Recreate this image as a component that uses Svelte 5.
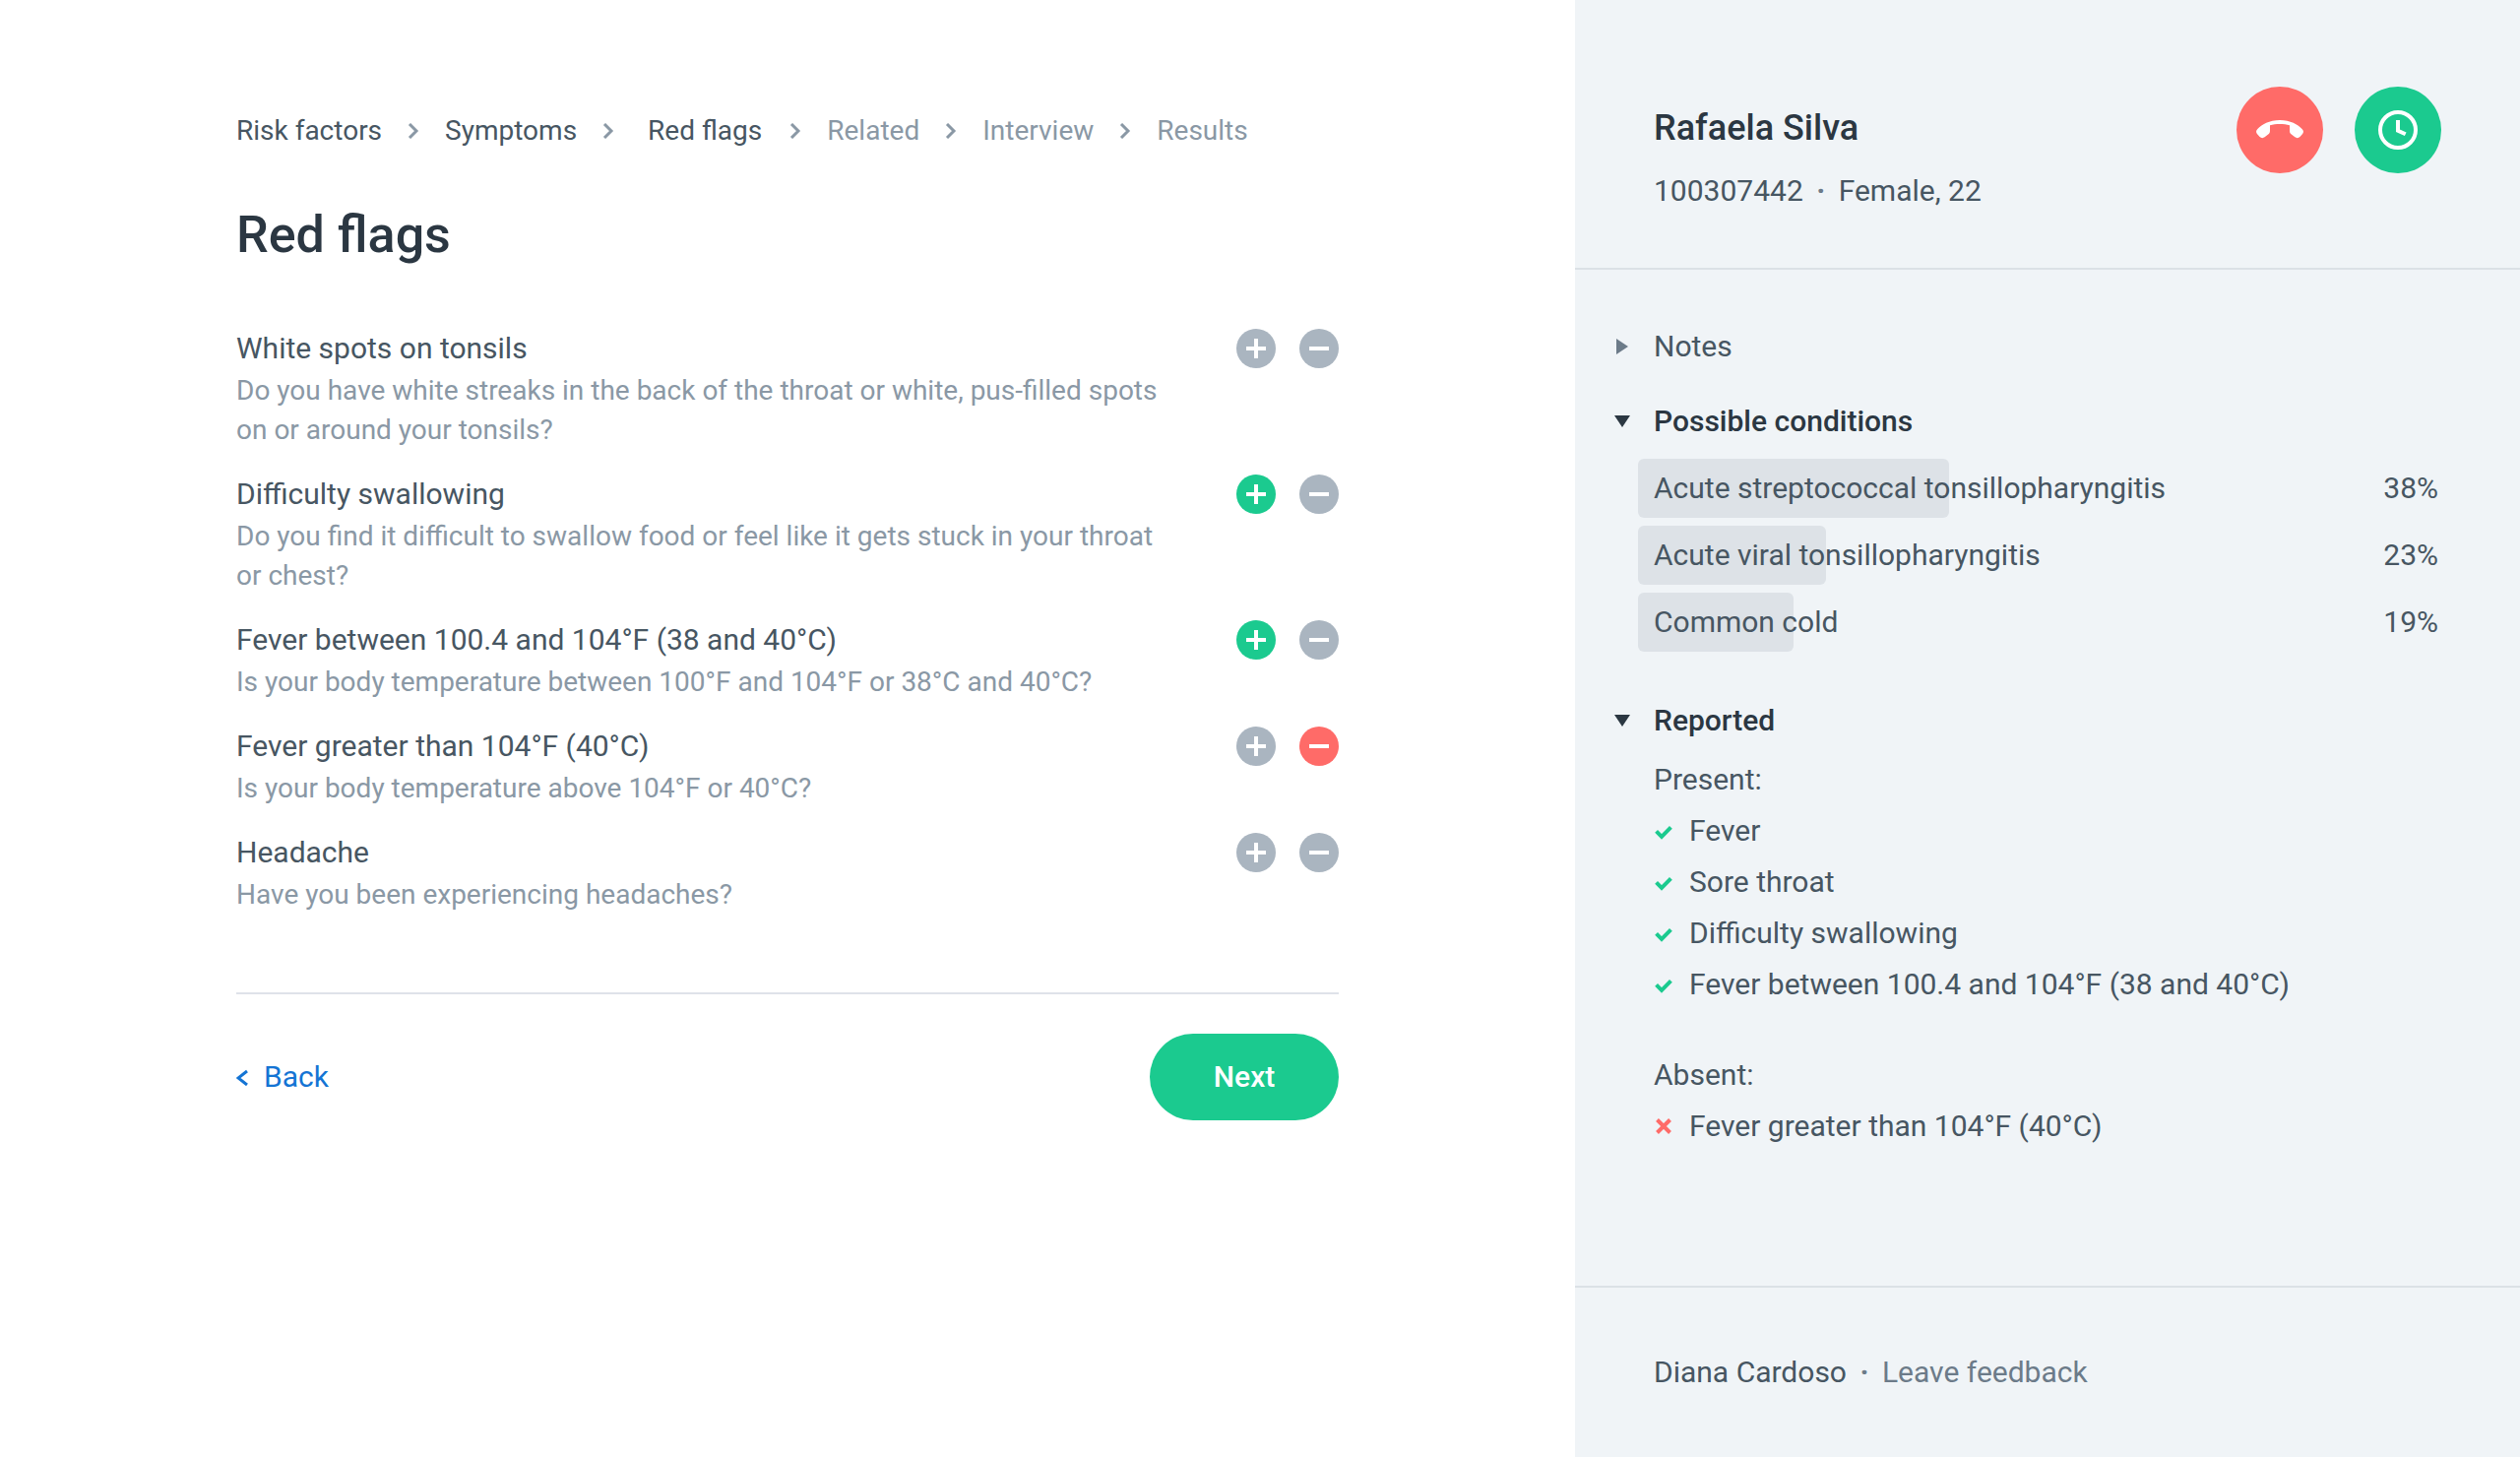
<script>
  const steps = ['Risk factors', 'Symptoms', 'Red flags', 'Related', 'Interview', 'Results']
  const current = 2

  let questions = $state([
    {
      name: 'White spots on tonsils',
      text: 'Do you have white streaks in the back of the throat or white, pus-filled spots on or around your tonsils?',
      answer: ''
    },
    {
      name: 'Difficulty swallowing',
      text: 'Do you find it difficult to swallow food or feel like it gets stuck in your throat or chest?',
      answer: 'present'
    },
    {
      name: 'Fever between 100.4 and 104°F (38 and 40°C)',
      text: 'Is your body temperature between 100°F and 104°F or 38°C and 40°C?',
      answer: 'present'
    },
    {
      name: 'Fever greater than 104°F (40°C)',
      text: 'Is your body temperature above 104°F or 40°C?',
      answer: 'absent'
    },
    {
      name: 'Headache',
      text: 'Have you been experiencing headaches?',
      answer: ''
    }
  ])

  const conditions = [
    { name: 'Acute streptococcal tonsillopharyngitis', probability: 38 },
    { name: 'Acute viral tonsillopharyngitis', probability: 23 },
    { name: 'Common cold', probability: 19 }
  ]

  let open = $state({ notes: false, conditions: true, reported: true })

  const initial = ['Fever', 'Sore throat']
  let present = $derived([...initial, ...questions.filter((q) => q.answer === 'present').map((q) => q.name)])
  let absent = $derived(questions.filter((q) => q.answer === 'absent').map((q) => q.name))

  function setAnswer(question, answer) {
    question.answer = question.answer === answer ? '' : answer
  }
</script>

{#snippet heading(key, title)}
  <h2>
    <button class="toggle" class:open={open[key]} aria-expanded={open[key]} onclick={() => (open[key] = !open[key])}>
      <svg width="16" height="16" viewBox="0 0 16 16" aria-hidden="true">
        {#if open[key]}
          <path d="M0 2h16L8 14z" />
        {:else}
          <path d="M2 0v16l12-8z" />
        {/if}
      </svg>
      {title}
    </button>
  </h2>
{/snippet}

<div class="app">
  <main>
    <nav aria-label="Steps">
      <ol class="steps">
        {#each steps as step, i}
          <li class:current={i === current} class:upcoming={i > current}>
            {#if i > 0}
              <svg width="12" height="16" viewBox="0 0 12 16" aria-hidden="true">
                <path d="M2 1l7 7-7 7" />
              </svg>
            {/if}
            <span>{step}</span>
          </li>
        {/each}
      </ol>
    </nav>

    <h1>Red flags</h1>

    <div class="questions">
      {#each questions as q}
        <section class="question">
          <header>
            <h3>{q.name}</h3>
            <div class="answers">
              <button
                class="answer"
                class:present={q.answer === 'present'}
                aria-label="Present"
                aria-pressed={q.answer === 'present'}
                onclick={() => setAnswer(q, 'present')}
              >
                <svg width="20" height="20" viewBox="0 0 20 20"><path d="M0 10h20M10 0v20" /></svg>
              </button>
              <button
                class="answer"
                class:absent={q.answer === 'absent'}
                aria-label="Absent"
                aria-pressed={q.answer === 'absent'}
                onclick={() => setAnswer(q, 'absent')}
              >
                <svg width="20" height="20" viewBox="0 0 20 20"><path d="M0 10h20" /></svg>
              </button>
            </div>
          </header>
          <p>{q.text}</p>
        </section>
      {/each}
    </div>

    <div class="actions">
      <a class="back" href="#symptoms">
        <svg width="12" height="18" viewBox="0 0 12 18" aria-hidden="true"><path d="M11 3L2 10l9 7" /></svg>
        Back
      </a>
      <button class="next">Next</button>
    </div>
  </main>

  <aside>
    <header class="patient">
      <div>
        <h2 class="name">Rafaela Silva</h2>
        <p>100307442 <span class="dot">·</span> Female, 22</p>
      </div>
      <div class="call">
        <button class="round hang-up" aria-label="End call">
          <svg width="48" height="48" viewBox="0 0 48 48">
            <path
              d="M24 14C13.500 14 5.500 18.500 1.200 23.200C-.3 24.900-.3 26.600.9 28L3.600 31C5 32.400 7 32.500 8.600 31.300L12.500 28.300C13.700 27.300 14 26.200 14 24.800V19.200C17 18.400 20.300 18 24 18s7 .4 10 1.200V24.800C34 26.200 34.300 27.300 35.500 28.300L39.400 31.300C41 32.500 43 32.400 44.400 31L47.100 28C48.300 26.600 48.300 24.900 46.800 23.200C42.500 18.500 34.500 14 24 14z"
            />
          </svg>
        </button>
        <button class="round later" aria-label="Call later">
          <svg width="48" height="48" viewBox="0 0 48 48">
            <circle cx="24" cy="24" r="18" />
            <path d="M24 14v10.700l7.700 3.600" />
          </svg>
        </button>
      </div>
    </header>

    <div class="details">
      <section>
        {@render heading('notes', 'Notes')}
      </section>

      <section>
        {@render heading('conditions', 'Possible conditions')}
        {#if open.conditions}
          <ul class="conditions">
            {#each conditions as c}
              <li>
                <div class="bar" style={`width:${c.probability}%`}></div>
                <span>{c.name}</span>
                <span>{c.probability}%</span>
              </li>
            {/each}
          </ul>
        {/if}
      </section>

      <section class="reported">
        {@render heading('reported', 'Reported')}
        {#if open.reported}
          <div class="evidence">
            <div>
              <p>Present:</p>
              <ul>
                {#each present as name}
                  <li>
                    <svg class="check" width="20" height="20" viewBox="0 0 20 20" aria-hidden="true">
                      <path d="M2.600 10.400L8 15.800l9.400-9.400" />
                    </svg>
                    {name}
                  </li>
                {/each}
              </ul>
            </div>
            <div>
              <p>Absent:</p>
              <ul>
                {#each absent as name}
                  <li>
                    <svg class="cross" width="20" height="20" viewBox="0 0 20 20" aria-hidden="true">
                      <path d="M3.500 3.500l13 13M16.500 3.500l-13 13" />
                    </svg>
                    {name}
                  </li>
                {/each}
              </ul>
            </div>
          </div>
        {/if}
      </section>
    </div>

    <footer>
      Diana Cardoso <span class="dot">·</span> <a href="#feedback">Leave feedback</a>
    </footer>
  </aside>
</div>

<style>
  :global(body) {
    margin: 0;
    font-family: Roboto, sans-serif;
    background: #fff;
    color: #475662;
  }
  h1,
  h2,
  h3,
  p,
  ul,
  ol {
    margin: 0;
    padding: 0;
    list-style: none;
  }
  svg {
    display: block;
    flex: none;
  }
  button {
    border: 0;
    padding: 0;
    background: none;
    color: inherit;
    font: inherit;
    cursor: pointer;
  }
  a {
    text-decoration: none;
  }
  .app {
    display: grid;
    grid-template-columns: 5fr 3fr;
    min-height: 100vh;
    font-size: 30px;
    line-height: 44px;
  }
  main {
    padding: 113px 240px;
  }

  .steps {
    display: flex;
    font-size: 28px;
    line-height: 40px;
  }
  .steps li {
    display: flex;
    align-items: center;
  }
  .steps svg {
    margin: 0 26px;
    fill: none;
    stroke: #8a98a5;
    stroke-width: 3;
  }
  .steps .current span {
    padding: 0 2px 0 8px;
  }
  .steps .upcoming {
    color: #8a98a5;
  }
  h1 {
    margin: 56px 0 63px;
    font-size: 52px;
    line-height: 60px;
    font-weight: 500;
    color: #2b3742;
  }

  .questions {
    display: flex;
    flex-direction: column;
    gap: 23px;
  }
  .question header {
    display: flex;
    align-items: center;
    justify-content: space-between;
  }
  h3 {
    font-size: 30px;
    font-weight: 400;
  }
  .question p {
    width: 85%;
    padding-top: 1px;
    font-size: 28px;
    line-height: 40px;
    color: #8a98a5;
  }
  .answers {
    display: flex;
    gap: 24px;
  }
  .answer {
    display: grid;
    place-items: center;
    width: 40px;
    height: 40px;
    border-radius: 50%;
    background: #aab5c0;
  }
  .answer svg {
    stroke: #fff;
    stroke-width: 4;
  }
  .answer.present,
  .later,
  .next {
    background: #1bca8f;
  }
  .answer.absent,
  .hang-up {
    background: #ff6b68;
  }

  .actions {
    display: flex;
    align-items: center;
    justify-content: space-between;
    margin-top: 79px;
    padding-top: 40px;
    border-top: 2px solid #dfe2e9;
  }
  .back {
    display: flex;
    align-items: center;
    gap: 16px;
    color: #1474d4;
  }
  .back svg {
    fill: none;
    stroke: currentColor;
    stroke-width: 3;
  }
  .next {
    width: 192px;
    height: 88px;
    border-radius: 44px;
    color: #fff;
    font-weight: 500;
  }

  aside {
    display: flex;
    flex-direction: column;
    background: #f0f4f7;
  }
  .patient {
    display: flex;
    justify-content: space-between;
    padding: 88px 80px 56px;
    border-bottom: 2px solid #dbe1e6;
  }
  .name {
    font-size: 36px;
    line-height: 84px;
    font-weight: 500;
    color: #2b3742;
  }
  .dot {
    margin: 0 6px;
    font-weight: 700;
    color: #6c7b89;
  }
  .call {
    display: flex;
    gap: 32px;
  }
  .round {
    display: grid;
    place-items: center;
    width: 88px;
    height: 88px;
    border-radius: 50%;
  }
  .hang-up svg {
    fill: #fff;
  }
  .later svg {
    fill: none;
    stroke: #fff;
    stroke-width: 4;
  }

  .details {
    flex: 1;
    display: flex;
    flex-direction: column;
    gap: 32px;
    padding: 56px 64px 64px 40px;
  }
  .details h2 {
    font-size: 30px;
    font-weight: 400;
  }
  .toggle {
    display: flex;
    align-items: center;
    gap: 24px;
  }
  .toggle svg {
    fill: #6c7b89;
  }
  .toggle.open {
    font-weight: 500;
    color: #2b3742;
  }
  .toggle.open svg {
    fill: #2b3742;
  }
  .conditions {
    display: flex;
    flex-direction: column;
    gap: 8px;
    margin: 16px 0 0 24px;
  }
  .conditions li {
    position: relative;
    display: flex;
    justify-content: space-between;
    padding: 0 19px 0 16px;
    line-height: 60px;
  }
  .conditions span {
    position: relative;
  }
  .bar {
    position: absolute;
    inset: 0 auto 0 0;
    border-radius: 6px;
    background: #dde2e7;
  }
  .reported {
    margin-top: 16px;
  }
  .evidence {
    display: flex;
    flex-direction: column;
    gap: 40px;
    margin: 12px 0 0 40px;
    line-height: 52px;
  }
  .evidence li {
    display: flex;
    align-items: center;
    gap: 16px;
  }
  .evidence svg {
    fill: none;
    stroke-width: 4;
  }
  .check {
    stroke: #1bca8f;
  }
  .cross {
    stroke: #ff6b68;
  }
  footer {
    padding: 64px 80px;
    border-top: 2px solid #dbe1e6;
  }
  footer a {
    color: #6c7b89;
  }
</style>
